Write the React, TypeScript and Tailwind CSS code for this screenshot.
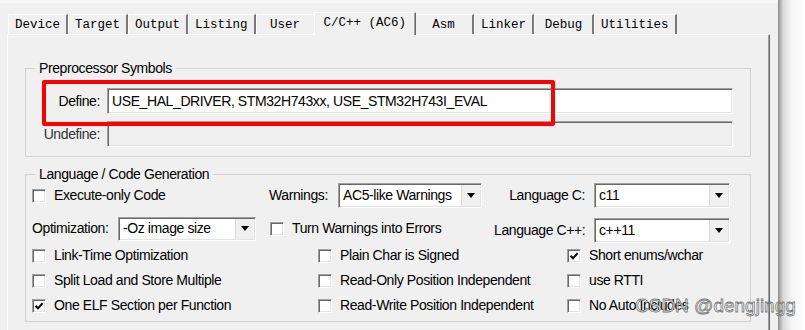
import React from "react";

const sans = "font-['Liberation_Sans',Arial,sans-serif] text-[14px] tracking-[-0.4px] text-black";
const sunken =
  "border border-t-[#a0a0a0] border-l-[#a0a0a0] border-b-white border-r-white shadow-[inset_1px_1px_0_#696969,inset_-1px_-1px_0_#e3e3e3]";

const tabs = ["Device", "Target", "Output", "Listing", "User", "C/C++ (AC6)", "Asm", "Linker", "Debug", "Utilities"];
const activeTab = 5;

function Check({ checked = false }: { checked?: boolean }) {
  return (
    <span className={`flex h-[14px] w-[14px] shrink-0 items-center justify-center bg-white ${sunken}`}>
      {checked && (
        <svg width="10" height="10" viewBox="0 0 10 10">
          <path d="M1.5 4.8 L4 7.3 L8.6 2.2" fill="none" stroke="#000" strokeWidth="2" />
        </svg>
      )}
    </span>
  );
}

function CheckItem({ label, checked }: { label: string; checked?: boolean }) {
  return (
    <div className="flex items-center gap-[8px]">
      <Check checked={checked} />
      <span className="whitespace-nowrap">{label}</span>
    </div>
  );
}

function Select({ value, className }: { value: string; className: string }) {
  return (
    <div className={`flex items-stretch bg-white ${sunken} ${className}`}>
      <span className="flex flex-1 items-center overflow-hidden whitespace-nowrap pl-[4px]">{value}</span>
      <span className="my-[1px] mr-[1px] flex w-[19px] items-center justify-center border-l border-l-[#d8d8d8] bg-[#f0f0f0]">
        <svg width="8" height="5" viewBox="0 0 8 5">
          <path d="M0 0h8L4 5z" fill="#000" />
        </svg>
      </span>
    </div>
  );
}

function Tab({ label, active }: { label: string; active: boolean }) {
  if (active) {
    return (
      <div className="relative z-10 -mx-[2px] -mb-[1px] flex h-[23px] min-w-[60px] items-start justify-center border-l border-t border-l-white border-t-white border-r border-r-[#696969] bg-[#f0f0f0] px-[9px] pt-[2px] shadow-[inset_-1px_0_0_#a0a0a0]">
        <span className="whitespace-pre leading-[16px]">{label}</span>
      </div>
    );
  }
  return (
    <div className="flex h-[20px] min-w-[60px] items-center justify-center border-l border-t border-l-white border-t-white border-r-2 border-r-[#7a7a7a] bg-[#f0f0f0] px-[6px] pt-[1px]">
      <span className="whitespace-pre leading-[16px]">{label}</span>
    </div>
  );
}

export default function App() {
  return (
    <div className="flex h-[330px] w-[805px] overflow-hidden bg-white">
      <div className="relative flex w-[778px] flex-col bg-[#f0f0f0]">
        <div className="h-[3px] bg-[#f8f8f8]" />

        {/* tab strip */}
        <div className="flex h-[31px] items-end pl-[8px] font-['Liberation_Mono','Courier_New',monospace] text-[12.5px] text-black">
          {tabs.map((t, i) => (
            <Tab key={t} label={t} active={i === activeTab} />
          ))}
        </div>

        {/* tab page */}
        <div className={`ml-[7px] mr-[8px] flex-1 border-l border-t border-l-white border-t-white border-r border-r-[#696969] pl-[17px] pr-[18px] shadow-[inset_-1px_0_0_#a0a0a0] ${sans}`}>
          <fieldset className="mt-[24px] border border-[#d3d3d3] pb-[9px] pr-[17px] pt-[11px]">
            <legend className="ml-[9px] px-[4px] leading-[18px]">Preprocessor Symbols</legend>
            <div className="grid grid-cols-[74px_1fr] items-center gap-x-[7px] gap-y-[7px]">
              <span className="text-right">Define:</span>
              <div className={`flex h-[26px] items-center bg-white pl-[4px] ${sunken}`}>
                USE_HAL_DRIVER, STM32H743xx, USE_STM32H743I_EVAL
              </div>
              <span className="text-right text-[#333]">Undefine:</span>
              <div className={`h-[26px] bg-[#f0f0f0] ${sunken}`} />
            </div>
          </fieldset>

          <fieldset className="mt-[8px] border border-[#d3d3d3] pb-[3px]">
            <legend className="ml-[9px] px-[4px] leading-[18px]">Language / Code Generation</legend>

            <div className="flex justify-between pl-[6px] pr-[20px]">
              <div className="grid grid-cols-[237px_auto] gap-y-[6px]">
                <div className="flex h-[25px] items-center">
                  <CheckItem label="Execute-only Code" />
                </div>
                <div className="flex h-[25px] items-center">
                  <span className="w-[69px]">Warnings:</span>
                  <Select value="AC5-like Warnings" className="h-[25px] w-[144px]" />
                </div>
                <div className="flex h-[25px] items-center">
                  <span className="w-[86px]">Optimization:</span>
                  <Select value="-Oz image size" className="h-[24px] w-[138px]" />
                </div>
                <div className="flex h-[25px] items-center pl-[1px]">
                  <CheckItem label="Turn Warnings into Errors" />
                </div>
              </div>

              <div className="grid grid-cols-[91px_136px] items-center gap-x-[9px] gap-y-[10px]">
                <span className="text-right">Language C:</span>
                <Select value="c11" className="h-[25px]" />
                <span className="whitespace-nowrap text-right">Language C++:</span>
                <Select value="c++11" className="h-[25px]" />
              </div>
            </div>

            <div className="grid grid-cols-[286px_249px_auto] pl-[6px]">
              <div className="flex h-[25px] items-center">
                <CheckItem label="Link-Time Optimization" />
              </div>
              <div className="flex h-[25px] items-center">
                <CheckItem label="Plain Char is Signed" />
              </div>
              <div className="flex h-[25px] items-center">
                <CheckItem label="Short enums/wchar" checked />
              </div>
              <div className="flex h-[25px] items-center">
                <CheckItem label="Split Load and Store Multiple" />
              </div>
              <div className="flex h-[25px] items-center">
                <CheckItem label="Read-Only Position Independent" />
              </div>
              <div className="flex h-[25px] items-center">
                <CheckItem label="use RTTI" />
              </div>
              <div className="flex h-[25px] items-center">
                <CheckItem label="One ELF Section per Function" checked />
              </div>
              <div className="flex h-[25px] items-center">
                <CheckItem label="Read-Write Position Independent" />
              </div>
              <div className="flex h-[25px] items-center">
                <CheckItem label="No Auto Includes" />
              </div>
            </div>
          </fieldset>
        </div>

        {/* red annotation box */}
        <div className="pointer-events-none absolute left-[42px] top-[80px] h-[46px] w-[513px] rounded-[2px] border-[4px] border-[#ff0000]" />

        {/* watermark */}
        <div className="pointer-events-none absolute left-[635px] top-[292px] whitespace-nowrap font-['Liberation_Sans',Arial,sans-serif] text-[19px] text-[#ffffffc0] [-webkit-text-stroke:0.8px_rgba(95,95,95,0.85)]">
          CSDN @dengjingg
        </div>
      </div>

      {/* window shadow */}
      <div className="w-[27px] bg-[linear-gradient(to_right,#8c8c8c,#d8d8d8_18%,#f4f4f4_50%,#ffffff)]" />
    </div>
  );
}
